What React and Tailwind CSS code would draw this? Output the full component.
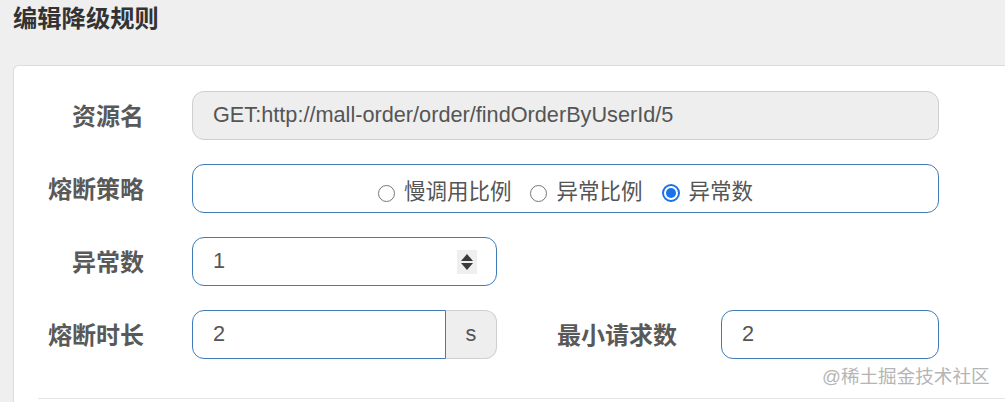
const cjk = "font-['Liberation_Sans','Noto_Sans_CJK_SC',sans-serif]";

function Label({ children }) {
  return (
    <div className={`w-[130px] shrink-0 text-right text-[24px] font-bold text-[#595959] leading-none pt-[3px] ${cjk}`}>
      {children}
    </div>
  );
}

function Radio({ checked, label }) {
  return (
    <label className="flex items-center gap-[9px]">
      {checked ? (
        <span className="w-[18px] h-[18px] rounded-full border-2 border-[#1a73e8] flex items-center justify-center">
          <span className="w-[10px] h-[10px] rounded-full bg-[#1a73e8]" />
        </span>
      ) : (
        <span className="w-[17px] h-[17px] rounded-full border border-[#767676] bg-white" />
      )}
      <span className="text-[21.5px] text-[#555] leading-none">{label}</span>
    </label>
  );
}

export default function App() {
  return (
    <div className={`w-[1005px] h-[402px] bg-[#efefef] overflow-hidden relative ${cjk}`}>
      {/* header */}
      <div className="h-[65px] pl-[13px] pt-[4px]">
        <h4 className="text-[24.3px] font-bold text-[#333] leading-[30px]">编辑降级规则</h4>
      </div>

      {/* modal body */}
      <div className="ml-[13px] w-[1100px] h-[400px] bg-white border-t border-l border-[#dcdcdc] rounded-tl-[6px] pt-[25px]">
        <div className="flex flex-col gap-[24px]">
          <div className="flex items-center gap-[48px]">
            <Label>资源名</Label>
            <div className="w-[747px] h-[49px] rounded-[12px] border border-[#cfcfcf] bg-[#eeeeee] flex items-center pl-[20px] text-[21.7px] text-[#555]">
              GET:http://mall-order/order/findOrderByUserId/5
            </div>
          </div>

          <div className="flex items-center gap-[48px]">
            <Label>熔断策略</Label>
            <div className="w-[747px] h-[49px] rounded-[12px] border border-[#3f7bb6] bg-white flex items-center justify-center gap-[19px] pt-[9px]">
              <Radio label="慢调用比例" />
              <Radio label="异常比例" />
              <Radio checked label="异常数" />
            </div>
          </div>

          <div className="flex items-center gap-[48px]">
            <Label>异常数</Label>
            <div className="w-[305px] h-[49px] rounded-[12px] border border-[#3f7bb6] bg-white flex items-center pl-[20px] pr-[19px] text-[21.7px] text-[#555]">
              <span className="flex-1">1</span>
              <span className="w-[20px] h-[24px] bg-[#efefef] flex flex-col items-center justify-center gap-[2px]">
                <span className="w-0 h-0 border-l-[6px] border-r-[6px] border-b-[7px] border-l-transparent border-r-transparent border-b-[#3a3a3a]" />
                <span className="w-0 h-0 border-l-[6px] border-r-[6px] border-t-[7px] border-l-transparent border-r-transparent border-t-[#3a3a3a]" />
              </span>
            </div>
          </div>

          <div className="flex items-center gap-[48px]">
            <Label>熔断时长</Label>
            <div className="w-[305px] h-[49px] flex">
              <div className="flex-1 rounded-l-[12px] border border-[#3f7bb6] bg-white flex items-center pl-[20px] text-[21.7px] text-[#555]">2</div>
              <div className="w-[51px] rounded-r-[12px] border border-l-0 border-[#cfcfcf] bg-[#eeeeee] flex items-center justify-center text-[21.7px] text-[#555]">s</div>
            </div>
            <div className="ml-[12px] text-[24px] font-bold text-[#595959] leading-none pt-[3px]">最小请求数</div>
            <div className="-ml-[4px] w-[218px] h-[49px] rounded-[12px] border border-[#3f7bb6] bg-white flex items-center pl-[20px] text-[21.7px] text-[#555]">2</div>
          </div>
        </div>

        <div className="ml-[24px] mt-[39px] border-t border-[#e5e5e5]" />
      </div>

      <div className="absolute left-[822px] top-[368px] text-[18.6px] text-[#b5b5b5] leading-none">@稀土掘金技术社区</div>
    </div>
  );
}
